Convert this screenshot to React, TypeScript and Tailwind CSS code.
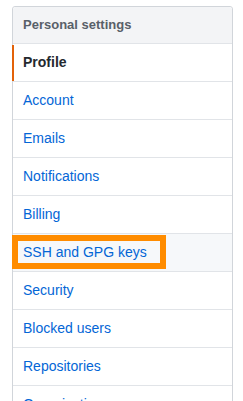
import React from "react";

const items = [
  "Account",
  "Emails",
  "Notifications",
  "Billing",
  "SSH and GPG keys",
  "Security",
  "Blocked users",
  "Repositories",
  "Organizations",
];

export default function App() {
  return (
    <div
      className="h-[401px] w-[243px] overflow-hidden bg-white pl-[12px] pt-[6px]"
      style={{ fontFamily: '"Liberation Sans", Arial, sans-serif' }}
    >
      <div className="w-[221px] rounded-t-[3px] border border-[#d1d5da]">
        <div className="flex h-[36px] items-center rounded-t-[3px] bg-[#f3f4f6] pl-[10px] text-[13px] font-bold text-[#586069]">
          Personal settings
        </div>
        <div className="relative flex h-[38px] items-center border-t border-[#e1e4e8] pl-[10px] text-[14px] font-bold text-[#24292e]">
          <div className="absolute bottom-0 left-[-1px] top-[1px] w-[2px] bg-[#e36209]" />
          Profile
        </div>
        {items.map((it) => {
          const hl = it === "SSH and GPG keys";
          return (
            <div
              key={it}
              className={
                hl
                  ? "relative flex h-[38px] items-center border-t border-[#e1e4e8] bg-[#f6f8fa] pl-[10px] text-[14px] text-[#0366d6]"
                  : "relative flex h-[38px] items-center border-t border-[#e1e4e8] pl-[10px] text-[14px] text-[#0366d6]"
              }
            >
              {hl && (
                <div className="absolute left-[-1px] top-[1px] h-[34px] w-[154px] border-[6px] border-[#ff8c00]" />
              )}
              <span className="relative">{it}</span>
            </div>
          );
        })}
      </div>
    </div>
  );
}
